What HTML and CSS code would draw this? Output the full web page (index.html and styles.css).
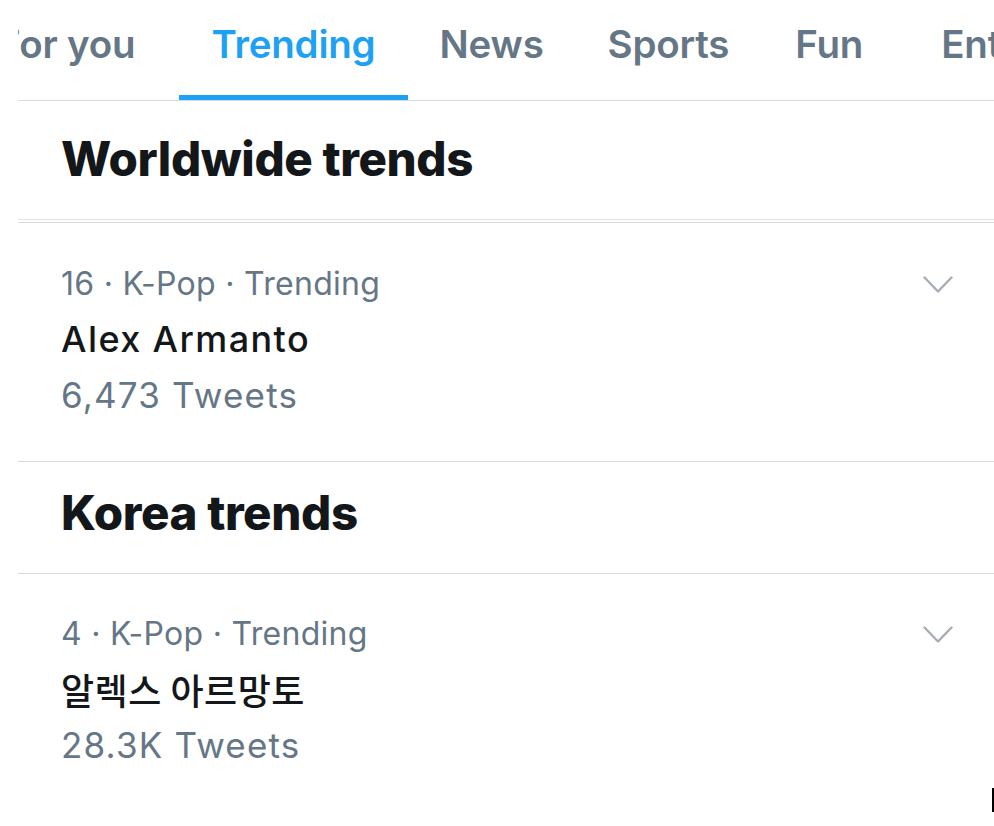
FILE: index.html
```html
<!DOCTYPE html>
<html lang="en">
<head>
<meta charset="utf-8">
<title>Trending</title>
<link rel="stylesheet" href="styles.css">
</head>
<body>
<div class="page">
  <nav class="tabs">
    <div class="tab-strip">
      <div class="tab tab-wide">For you</div>
      <div class="tab active">Trending</div>
      <div class="tab">News</div>
      <div class="tab">Sports</div>
      <div class="tab tab-fun">Fun</div>
      <div class="tab">Entertainment</div>
    </div>
  </nav>

  <section class="section-head first">
    <h2>Worldwide trends</h2>
  </section>

  <div class="trend trend-first">
    <div class="trend-text">
      <div class="meta">16 · K-Pop · Trending</div>
      <div class="name">Alex Armanto</div>
      <div class="count">6,473 Tweets</div>
    </div>
    <svg class="chevron" viewBox="0 0 30 18" width="30" height="18"><path d="M1.5 1.5 L15 15.5 L28.5 1.5" fill="none" stroke="#a5adb5" stroke-width="2.4" stroke-linecap="round" stroke-linejoin="round"/></svg>
  </div>

  <section class="section-head second">
    <h2>Korea trends</h2>
  </section>

  <div class="trend trend-last">
    <div class="trend-text">
      <div class="meta">4 · K-Pop · Trending</div>
      <div class="name name-ko">알렉스 아르망토</div>
      <div class="count">28.3K Tweets</div>
    </div>
    <svg class="chevron" viewBox="0 0 30 18" width="30" height="18"><path d="M1.5 1.5 L15 15.5 L28.5 1.5" fill="none" stroke="#a5adb5" stroke-width="2.4" stroke-linecap="round" stroke-linejoin="round"/></svg>
  </div>
</div>
<div class="cursor"></div>
</body>
</html>
```

FILE: styles.css
```css
html, body {
  margin: 0;
  padding: 0;
  background: #ffffff;
}

body {
  font-family: Inter, "Noto Sans", "Noto Sans CJK KR", sans-serif;
  color: #14171a;
  overflow: hidden;
  height: 826px;
  position: relative;
}

.page {
  margin-left: 18px;
}

.tabs {
  height: 100px;
  border-bottom: 1px solid #d6dbe0;
  overflow: hidden;
}

.tab-strip {
  display: flex;
  margin-left: -52px;
  height: 100px;
  white-space: nowrap;
}

.tab {
  box-sizing: border-box;
  height: 100px;
  padding: 21px 32px 0;
  font-size: 38.5px;
  font-weight: 600;
  line-height: 46px;
  color: #657786;
  border-bottom: 5px solid transparent;
  letter-spacing: -0.2px;
}

.tab-wide {
  padding-right: 44px;
}

.tab-fun {
  padding-left: 34px;
  padding-right: 46px;
}

.tab.active {
  color: #1da1f2;
  border-bottom-color: #1da1f2;
}

.section-head h2 {
  margin: 0;
  font-size: 47.5px;
  line-height: 56px;
  font-weight: 800;
  letter-spacing: -0.4px;
  padding-left: 43px;
}

.section-head.first {
  padding: 30px 0 32px;
  border-bottom: 1px solid #dde1e5;
}

.section-head.second {
  padding: 23px 0 32px;
  border-bottom: 1px solid #d6dbe0;
}

.trend {
  display: flex;
  justify-content: space-between;
  align-items: flex-start;
  padding: 43px 41px 46px 43px;
}

.trend-first {
  border-top: 1px solid #d6dbe0;
  margin-top: 2px;
  border-bottom: 1px solid #d6dbe0;
}

.trend-last {
  padding-top: 42px;
}

.meta {
  font-size: 32px;
  line-height: 36px;
  color: #657786;
  font-weight: 400;
  letter-spacing: 0.3px;
}

.name {
  margin-top: 17px;
  font-size: 36px;
  line-height: 40px;
  font-weight: 500;
  letter-spacing: 1.4px;
  color: #14171a;
}

.name-ko {
  font-family: "Noto Sans CJK KR", sans-serif;
  font-size: 36px;
  letter-spacing: 0.5px;
}

.count {
  margin-top: 16px;
  font-size: 35px;
  line-height: 40px;
  letter-spacing: 1.2px;
  color: #657786;
}

.chevron {
  margin-top: 10px;
  display: block;
}

.cursor {
  position: absolute;
  left: 992px;
  top: 788px;
  width: 2px;
  height: 24px;
  background: #000;
}
```
